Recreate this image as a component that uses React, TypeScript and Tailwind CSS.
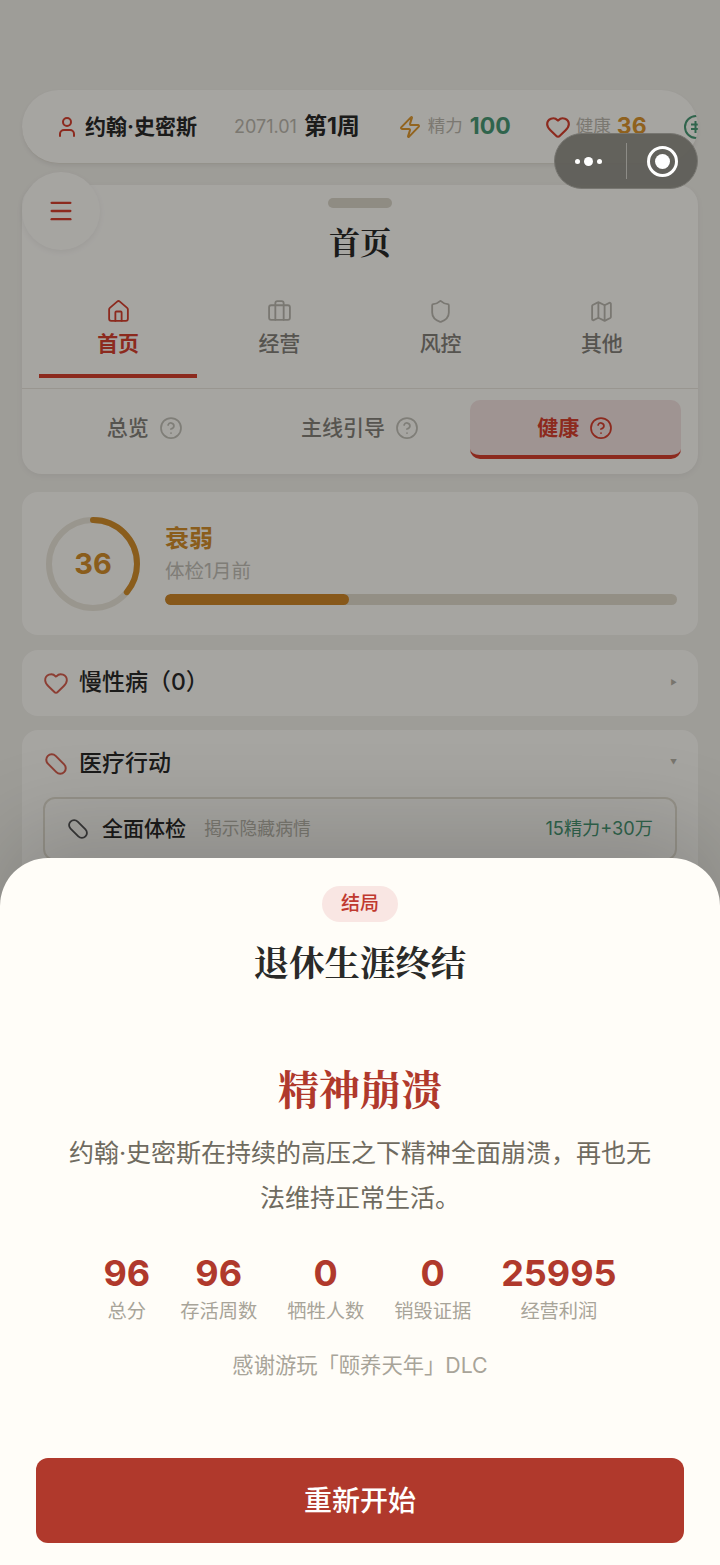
import { useState } from 'react';
import { Briefcase, CircleHelp, Heart, House, Map, Menu, Shield, User, Zap } from 'lucide-react';

const sansFont = "font-['Inter','Noto_Sans_CJK_SC',sans-serif]";
const serifFont = "font-['Noto_Serif_CJK_SC','Liberation_Serif','Noto_Sans_CJK_SC',serif]";

const mainTabs = [
  { label: '首页', Icon: House, active: true },
  { label: '经营', Icon: Briefcase, active: false },
  { label: '风控', Icon: Shield, active: false },
  { label: '其他', Icon: Map, active: false },
];

const subTabs = [
  { label: '总览', active: false },
  { label: '主线引导', active: false },
  { label: '健康', active: true },
];

const stats = [
  { value: '96', label: '总分' },
  { value: '96', label: '存活周数' },
  { value: '0', label: '牺牲人数' },
  { value: '0', label: '销毁证据' },
  { value: '25995', label: '经营利润' },
];

const PillIcon = ({ className }: { className: string }) => (
  <svg viewBox="0 0 24 24" fill="none" stroke="currentColor" strokeWidth="2" className={className}>
    <rect x="0.5" y="6.5" width="23" height="11" rx="5.5" transform="rotate(45 12 12)" />
  </svg>
);

const CoinIcon = ({ className }: { className: string }) => (
  <svg viewBox="0 0 26 26" fill="none" stroke="currentColor" strokeWidth="2" className={className}>
    <circle cx="13" cy="13" r="11" />
    <path d="M12.5 7v12M8 10.5h9M8 15h9" />
  </svg>
);

const StatusBar = () => (
  <div className="h-[74px] rounded-[37px] bg-[#fffdf8] border-b border-[#e4e0d6] shadow-[0_2px_4px_rgba(0,0,0,0.06)] overflow-hidden flex items-center pl-[33px] whitespace-nowrap">
    <User className="w-[24px] h-[24px] text-[#d8412f] shrink-0" strokeWidth={2} />
    <span className="ml-[6px] text-[21px] font-bold text-[#2a2a28]">约翰·史密斯</span>
    <span className="ml-[37px] text-[18px] text-[#bdb9ae]">2071.01</span>
    <span className="ml-[7px] text-[23px] font-bold text-[#2a2a28]">第1周</span>
    <Zap className="ml-[38px] w-[24px] h-[24px] text-[#e09a30] shrink-0" strokeWidth={2} />
    <span className="ml-[6px] text-[17.5px] text-[#bdb9ae]">精力</span>
    <span className="ml-[7px] text-[23px] font-bold text-[#4a9a76]">100</span>
    <Heart className="ml-[34px] w-[26px] h-[26px] text-[#d8412f] shrink-0" strokeWidth={2} />
    <span className="ml-[5px] text-[17.5px] text-[#bdb9ae]">健康</span>
    <span className="ml-[6px] text-[23px] font-bold text-[#dc962e]">36</span>
    <CoinIcon className="ml-[36px] w-[26px] h-[26px] text-[#4a9a76] shrink-0" />
  </div>
);

const NavCard = () => (
  <div className="mt-[21px] h-[289px] rounded-[20px] bg-[#fffdf8] shadow-[0_2px_6px_rgba(0,0,0,0.05)] flex flex-col">
    <div className="mt-[13px] mx-auto w-[64px] h-[10px] rounded-full bg-[#dcd7c9]" />
    <h1 className={`${serifFont} mt-[10px] h-[45px] leading-[45px] text-center text-[31px] font-bold text-[#2a2a28]`}>首页</h1>
    <div className="mt-[35px] mx-[17px] grid grid-cols-4 gap-[3px] h-[80px]">
      {mainTabs.map(({ label, Icon, active }) => (
        <div key={label} className={`flex flex-col items-center border-b-4 pt-[1px] ${active ? 'border-[#d8412f] text-[#d8412f]' : 'border-transparent text-[#bcb9b0]'}`}>
          <Icon className="w-[25px] h-[25px]" strokeWidth={1.75} />
          <span className={`text-[21px] leading-[32px] mt-[4px] ${active ? 'font-bold' : 'font-medium text-[#85827a]'}`}>{label}</span>
        </div>
      ))}
    </div>
    <div className="mt-[10px] border-t border-[#ebe7dd] px-[17px] pt-[11px] grid grid-cols-3 gap-[4px]">
      {subTabs.map(({ label, active }) => (
        <div key={label} className={`h-[59px] flex items-center justify-center gap-[10px] text-[21px] rounded-[10px] border-b-[4px] ${active ? 'bg-[#f5e3e0] border-[#d8412f] text-[#d8412f] font-bold' : 'border-transparent text-[#85827a] font-medium'}`}>
          <span>{label}</span>
          <CircleHelp className={`w-[24px] h-[24px] ${active ? 'text-[#d8412f]' : 'text-[#c4c2b8]'}`} strokeWidth={1.75} />
        </div>
      ))}
    </div>
  </div>
);

const HealthCard = () => (
  <div className="mt-[18px] h-[143px] rounded-[16px] bg-[#fffdf8] flex items-center pl-[24px] pr-[21px]">
    <div className="relative w-[94px] h-[94px] shrink-0">
      <svg viewBox="0 0 94 94" className="w-full h-full -rotate-90">
        <circle cx="47" cy="47" r="44" fill="none" stroke="#ece7da" strokeWidth="6" />
        <circle cx="47" cy="47" r="44" fill="none" stroke="#d48f2c" strokeWidth="6" strokeLinecap="round" strokeDasharray="99.5 276.5" />
      </svg>
      <div className="absolute inset-0 flex items-center justify-center text-[29px] font-bold text-[#d48f2c]">36</div>
    </div>
    <div className="ml-[25px] flex-1">
      <div className="text-[24px] leading-[32px] font-bold text-[#d48f2c]">衰弱</div>
      <div className="text-[19.5px] leading-[30px] mt-[1px] text-[#c4c1b7]">体检1月前</div>
      <div className="mt-[8px] h-[11px] rounded-full bg-[#e2dccd] overflow-hidden">
        <div className="h-full rounded-full bg-[#cf8728]" style={{ width: '36%' }} />
      </div>
    </div>
  </div>
);

const ChronicCard = () => (
  <div className="mt-[15px] h-[66px] rounded-[16px] bg-[#fffdf8] flex items-center pl-[21px] pr-[21px]">
    <Heart className="w-[26px] h-[26px] text-[#d8604f]" strokeWidth={1.75} />
    <span className="ml-[10px] mb-[2px] text-[23px] font-medium text-[#2a2a28]">慢性病（0）</span>
    <span className="ml-auto text-[7px] text-[#b8b4a8]">▶</span>
  </div>
);

const MedicalCard = () => (
  <div className="mt-[14px] h-[200px] rounded-[16px] bg-[#fffdf8] px-[21px]">
    <div className="h-[67px] flex items-center">
      <PillIcon className="w-[24px] h-[24px] ml-[1px] mr-[1px] text-[#d8604f]" />
      <span className="ml-[10px] text-[23px] font-medium text-[#2a2a28]">医疗行动</span>
      <span className="ml-auto text-[7px] text-[#b8b4a8]">▼</span>
    </div>
    <div className="h-[64px] rounded-[12px] border-2 border-[#e4dfd1] flex items-center pl-[22px] pr-[22px]">
      <PillIcon className="w-[22px] h-[22px] text-[#555]" />
      <span className="ml-[13px] text-[21px] font-medium text-[#2a2a28]">全面体检</span>
      <span className="ml-[18px] text-[17.8px] text-[#bcb9ad]">揭示隐藏病情</span>
      <span className="ml-auto text-[18.2px] text-[#4a9a76]">15精力+30万</span>
    </div>
  </div>
);

const EndingSheet = ({ onRestart }: { onRestart: () => void }) => (
  <div className="absolute left-0 right-0 bottom-0 h-[707px] rounded-t-[48px] bg-[#fffdf8] shadow-[0_-30px_90px_rgba(0,0,0,0.16)] flex flex-col items-center">
    <span className="mt-[28px] w-[76px] h-[36px] rounded-full bg-[#f9e6e3] flex items-center justify-center pt-[1px] text-[19px] font-medium text-[#c0392f]">结局</span>
    <h2 className={`${serifFont} mt-[16px] h-[46px] leading-[46px] text-[35.4px] font-bold text-[#2a2a28]`}>退休生涯终结</h2>
    <div className={`${serifFont} mt-[79px] h-[50px] leading-[50px] text-[41px] font-bold text-[#b0392c]`}>精神崩溃</div>
    <p className="mt-[18px] w-[590px] text-center text-[25px] leading-[45px] text-[#6f6b60]">约翰·史密斯在持续的高压之下精神全面崩溃，再也无法维持正常生活。</p>
    <div className="mt-[32px] flex gap-[30px] justify-center">
      {stats.map((s) => (
        <div key={s.label} className="flex flex-col items-center">
          <span className="text-[36px] leading-[40px] font-bold text-[#b0392c]">{s.value}</span>
          <span className="mt-[4px] text-[19.25px] leading-[28px] text-[#a8a499]">{s.label}</span>
        </div>
      ))}
    </div>
    <div className="mt-[25px] text-[21.3px] leading-[30px] text-[#a8a499]">感谢游玩「颐养天年」DLC</div>
    <button onClick={onRestart} className="mt-[78px] w-[648px] h-[85px] rounded-[12px] bg-[#b0392c] text-white text-[28px] font-medium">重新开始</button>
  </div>
);

export default function App() {
  const [, setRound] = useState(0);

  return (
    <div className={`${sansFont} relative w-[720px] h-[1565px] overflow-hidden bg-[#f3f1ea]`}>
      <div className="px-[22px] pt-[90px]">
        <StatusBar />
        <NavCard />
        <HealthCard />
        <ChronicCard />
        <MedicalCard />
      </div>
      <div className="absolute left-[22px] top-[172px] w-[78px] h-[78px] rounded-full bg-[#fffdf8] shadow-[0_2px_6px_rgba(0,0,0,0.06)] flex items-center justify-center">
        <Menu className="w-[28px] h-[28px] text-[#d8412f]" strokeWidth={2} />
      </div>
      <div className="absolute inset-0 bg-black/35" />
      <div className="absolute left-[554px] top-[133px] w-[144px] h-[56px] rounded-full bg-[#5f5e59]/95 border border-[#777671] flex items-center">
        <div className="w-[71px] pr-[5px] flex items-center justify-center gap-[4px]">
          <span className="w-[5px] h-[5px] rounded-full bg-white" />
          <span className="w-[9px] h-[9px] rounded-full bg-white" />
          <span className="w-[5px] h-[5px] rounded-full bg-white" />
        </div>
        <div className="w-px h-[36px] bg-[#8d8c87]" />
        <div className="flex-1 flex justify-center">
          <div className="w-[31px] h-[31px] rounded-full border-[3px] border-white flex items-center justify-center">
            <div className="w-[15px] h-[15px] rounded-full bg-white" />
          </div>
        </div>
      </div>
      <EndingSheet onRestart={() => setRound((r) => r + 1)} />
    </div>
  );
}
